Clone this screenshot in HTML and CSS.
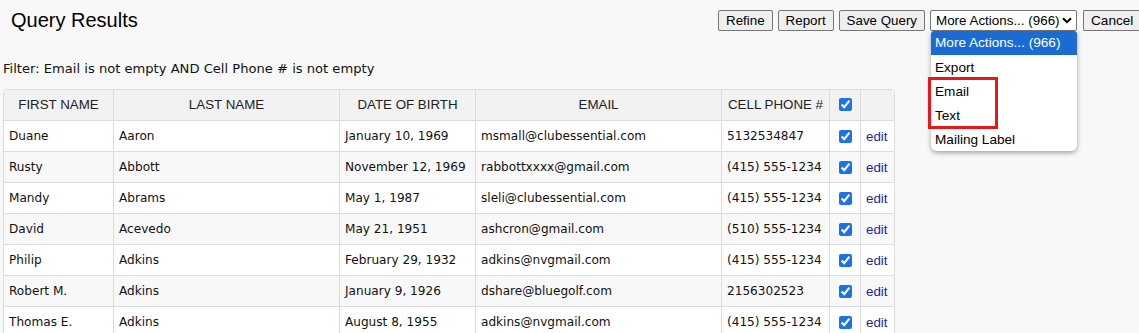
FILE: index.html
```html
<!DOCTYPE html>
<html lang="en">
<head>
    <meta charset="UTF-8">
    <title>Query Results</title>
    <link rel="stylesheet" href="styles.css">
</head>
<body>
    <div id="page">
        <!-- Title row with action buttons -->
        <div class="top-bar">
            <h1>Query Results</h1>
            <div class="actions">
                <button class="btn">Refine</button>
                <button class="btn">Report</button>
                <button class="btn">Save Query</button>
                <div class="select-wrap">
                    <div class="select-box"><span>More Actions... (966)</span>
                        <svg class="chev" width="10" height="7" viewBox="0 0 10 7"><path d="M1 1.2 L5 5.2 L9 1.2" fill="none" stroke="#000" stroke-width="2"/></svg>
                    </div>
                    <!-- open dropdown list -->
                    <div class="select-list">
                        <div class="opt selected">More Actions... (966)</div>
                        <div class="opt">Export</div>
                        <div class="opt">Email</div>
                        <div class="opt">Text</div>
                        <div class="opt">Mailing Label</div>
                        <div class="highlight-box"></div>
                    </div>
                </div>
                <button class="btn btn-cut">Cancel</button>
            </div>
        </div>

        <div class="filter">Filter: Email is not empty AND Cell Phone # is not empty</div>

        <table class="results">
            <thead>
                <tr>
                    <th class="c-first">FIRST NAME</th>
                    <th class="c-last">LAST NAME</th>
                    <th class="c-dob">DATE OF BIRTH</th>
                    <th class="c-email">EMAIL</th>
                    <th class="c-phone">CELL PHONE #</th>
                    <th class="c-check"><input type="checkbox" checked></th>
                    <th class="c-edit"></th>
                </tr>
            </thead>
            <tbody>
                <tr><td>Duane</td><td>Aaron</td><td>January 10, 1969</td><td>msmall@clubessential.com</td><td>5132534847</td><td class="c-check"><input type="checkbox" checked></td><td><a href="#">edit</a></td></tr>
                <tr><td>Rusty</td><td>Abbott</td><td>November 12, 1969</td><td>rabbottxxxx@gmail.com</td><td>(415) 555-1234</td><td class="c-check"><input type="checkbox" checked></td><td><a href="#">edit</a></td></tr>
                <tr><td>Mandy</td><td>Abrams</td><td>May 1, 1987</td><td>sleli@clubessential.com</td><td>(415) 555-1234</td><td class="c-check"><input type="checkbox" checked></td><td><a href="#">edit</a></td></tr>
                <tr><td>David</td><td>Acevedo</td><td>May 21, 1951</td><td>ashcron@gmail.com</td><td>(510) 555-1234</td><td class="c-check"><input type="checkbox" checked></td><td><a href="#">edit</a></td></tr>
                <tr><td>Philip</td><td>Adkins</td><td>February 29, 1932</td><td>adkins@nvgmail.com</td><td>(415) 555-1234</td><td class="c-check"><input type="checkbox" checked></td><td><a href="#">edit</a></td></tr>
                <tr><td>Robert M.</td><td>Adkins</td><td>January 9, 1926</td><td>dshare@bluegolf.com</td><td>2156302523</td><td class="c-check"><input type="checkbox" checked></td><td><a href="#">edit</a></td></tr>
                <tr><td>Thomas E.</td><td>Adkins</td><td>August 8, 1955</td><td>adkins@nvgmail.com</td><td>(415) 555-1234</td><td class="c-check"><input type="checkbox" checked></td><td><a href="#">edit</a></td></tr>
            </tbody>
        </table>
    </div>
</body>
</html>
```

FILE: styles.css
```css
/* Reset margin for body */
body {
    margin: 0;
    overflow: hidden;
    background-color: #f8f8f8;
    font-family: "DejaVu Sans", Verdana, sans-serif;
    color: #111;
}

#page {
    padding: 0 0 0 3px;
}

.top-bar {
    display: flex;
    align-items: flex-start;
    height: 50px;
}

h1 {
    margin: 9px 0 0 8px;
    font-family: "Liberation Sans", Arial, sans-serif;
    font-size: 20px;
    font-weight: normal;
    color: #000;
}

.actions {
    display: flex;
    gap: 5px;
    margin-top: 10px;
    margin-left: auto;
}

.btn {
    height: 21px;
    padding: 0 7px;
    font-family: "Liberation Sans", Arial, sans-serif;
    font-size: 13.33px;
    color: #000;
    background-color: #efefef;
    border: 1px solid #767676;
    border-radius: 2px;
    white-space: nowrap;
}

/* Cancel is cut by the window edge */
.btn-cut {
    width: 56px;
    padding: 0 0 0 7px;
    text-align: left;
    font-size: 13.6px;
    border-right: none;
    border-radius: 2px 0 0 2px;
}

.select-wrap {
    position: relative;
    margin-right: 1px;
}

.select-box {
    box-sizing: border-box;
    display: flex;
    align-items: center;
    justify-content: space-between;
    height: 21px;
    padding: 0 4px 0 5px;
    width: 147px;
    font-family: "Liberation Sans", Arial, sans-serif;
    font-size: 13.4px;
    color: #000;
    white-space: nowrap;
    background-color: #fff;
    border: 1px solid #767676;
    border-radius: 2px;
}

/* Open dropdown, lies over the table */
.select-list {
    position: absolute;
    top: 21px;
    left: 1px;
    width: 146px;
    background-color: #fff;
    border-radius: 0 0 6px 6px;
    box-shadow: 0 2px 5px rgba(0, 0, 0, 0.35);
    font-family: "Liberation Sans", Arial, sans-serif;
    font-size: 13.6px;
    color: #000;
    z-index: 10;
}

.opt {
    height: 24px;
    line-height: 26px;
    padding-left: 4px;
}

.opt.selected {
    background-color: #1a6cd4;
    color: #fff;
    border-radius: 3px 3px 0 0;
    line-height: 24px;
}

.opt:last-of-type {
    height: 22px;
    line-height: 22px;
}

.highlight-box {
    position: absolute;
    top: 46px;
    left: -3px;
    width: 64px;
    height: 46px;
    border: 3px solid #e8171c;
}

.filter {
    font-size: 13.1px;
    color: #111;
    margin: 11px 0 0 0;
    height: 28px;
}

.results {
    border-collapse: separate;
    border-spacing: 0;
    border: 1px solid #dcdcdc;
    border-radius: 4px 4px 0 0;
    font-size: 12.1px;
}

.results th {
    background-color: #f2f2f2;
    font-family: "Liberation Sans", Arial, sans-serif;
    font-size: 13.33px;
    font-weight: normal;
    color: #222;
    height: 28px;
    padding: 0 0 2px 0;
    border-right: 1px solid #dcdcdc;
    border-bottom: 1px solid #dcdcdc;
}

.results td {
    height: 30px;
    padding: 0 0 0 5px;
    border-right: 1px solid #dcdcdc;
    border-bottom: 1px solid #dcdcdc;
    background-color: #fff;
    white-space: nowrap;
}

.results tr:nth-child(even) td {
    background-color: #f8f8f8;
}

.results th:last-child,
.results td:last-child {
    border-right: none;
}

.c-first { width: 109px; }
.c-last { width: 225px; }
.c-dob { width: 135px; }
.c-email { width: 245px; }
.c-phone { width: 107px; }
.c-check { width: 30px; }
.c-edit { width: 33px; }

.results td.c-check {
    padding: 0;
    text-align: center;
}

.results input[type="checkbox"] {
    width: 13px;
    height: 13px;
    margin: 3px 0 0 0;
    accent-color: #1a73e8;
}

.results a {
    color: #2b1aa5;
    font-family: "Liberation Sans", Arial, sans-serif;
    font-size: 13.33px;
    text-decoration: none;
}
```
